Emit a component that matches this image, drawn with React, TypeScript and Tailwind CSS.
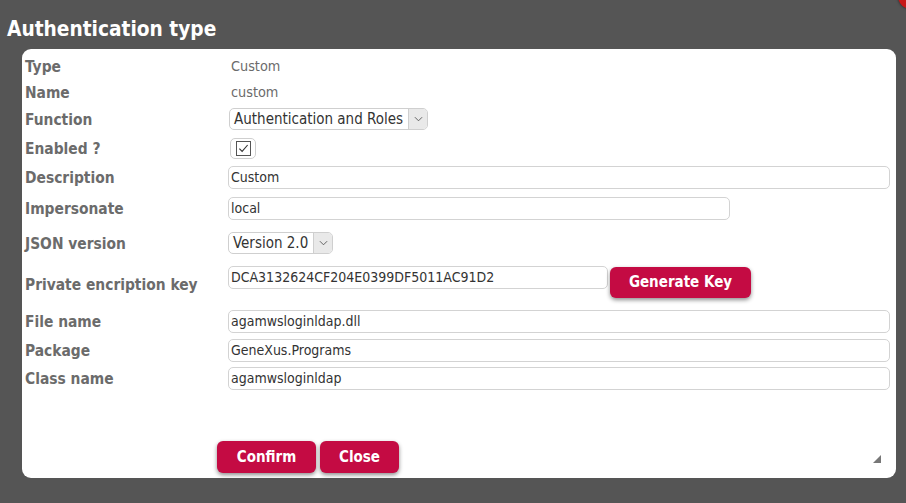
const font = { fontFamily: '"DejaVu Sans Condensed", "DejaVu Sans", sans-serif' };

const Chevron = () => (
  <svg viewBox="0 0 10 6" className="w-[9px] h-[6px]" fill="none" stroke="#555" strokeWidth={1}>
    <path d="M1 1l4 4 4-4" />
  </svg>
);

function Select({ value }: { value: string }) {
  return (
    <div className="flex h-[22px] items-stretch rounded-[5px] border border-[#cfcfcf] bg-white">
      <span className="flex items-center pl-[4px] pr-[5px] text-[15px] text-[#333]">{value}</span>
      <span className="flex w-[19px] items-center justify-center rounded-r-[4px] border-l border-[#cfcfcf] bg-[#e9e9e9]">
        <Chevron />
      </span>
    </div>
  );
}

function TextBox({ value, w }: { value: string; w: string }) {
  return (
    <div className={`flex h-[23px] items-center rounded-[5px] border border-[#d3d3d3] bg-white px-[2px] text-[14px] text-[#333] ${w}`}>
      {value}
    </div>
  );
}

function Btn({ label, w }: { label: string; w: string }) {
  return (
    <button className={`h-[31px] rounded-[6px] bg-[#c40b43] text-[15px] font-bold text-white shadow-[0_2px_4px_rgba(0,0,0,0.45)] ${w}`}>
      {label}
    </button>
  );
}

function Row({ label, h, children, top }: { label: string; h: string; children: React.ReactNode; top?: boolean }) {
  return (
    <div className={`flex ${h} ${top ? "items-start" : "items-center"}`}>
      <div className={`w-[206px] shrink-0 pl-[3px] pt-[3px] text-[15.4px] font-bold text-[#6b6b6b] ${top ? "self-center" : ""}`}>{label}</div>
      {children}
    </div>
  );
}

export default function App() {
  return (
    <div className="relative h-[503px] w-[906px] overflow-hidden bg-[#555555]" style={font}>
      <div className="absolute right-[-18px] top-[-17px] h-[26px] w-[26px] rounded-full bg-[#c81818] shadow-[0_0_3px_rgba(0,0,0,0.6)]" />
      <div className="flex h-[49px] items-center pl-[7px] pt-[11px] text-[20.7px] font-bold text-white">Authentication type</div>
      <div className="relative ml-[22px] flex h-[429px] w-[874px] flex-col rounded-[9px] bg-white pt-[4px]">
        <Row label="Type" h="h-[26px]">
          <span className="pl-[3px] pt-[2px] text-[14.3px] text-[#6b6b6b]">Custom</span>
        </Row>
        <Row label="Name" h="h-[26px]">
          <span className="pl-[3px] pt-[2px] text-[14.3px] text-[#6b6b6b]">custom</span>
        </Row>
        <Row label="Function" h="h-[28px]">
          <div className="pl-[1px]">
            <Select value="Authentication and Roles" />
          </div>
        </Row>
        <Row label="Enabled ?" h="h-[30px]">
          <div className="ml-[2px] flex h-[21px] w-[26px] items-center justify-center rounded-[5px] border border-[#cfcfcf]">
            <div className="flex h-[15px] w-[15px] items-center justify-center border border-[#555] bg-white">
              <svg viewBox="0 0 12 12" className="h-[11px] w-[11px]" fill="none" stroke="#333" strokeWidth={1.2}>
                <path d="M1.5 6.2l3 3 6-7" />
              </svg>
            </div>
          </div>
        </Row>
        <Row label="Description" h="h-[28px]">
          <TextBox value="Custom" w="w-[662px]" />
        </Row>
        <Row label="Impersonate" h="h-[34px]">
          <TextBox value="local" w="w-[502px]" />
        </Row>
        <Row label="JSON version" h="h-[36px]">
          <Select value="Version 2.0" />
        </Row>
        <Row label="Private encription key" h="h-[46px]" top>
          <div className="mt-[5px] flex items-start gap-[2px]">
            <TextBox value="DCA3132624CF204E0399DF5011AC91D2" w="w-[380px]" />
            <div className="mt-[1px]">
              <Btn label="Generate Key" w="w-[141px]" />
            </div>
          </div>
        </Row>
        <Row label="File name" h="h-[28px]">
          <TextBox value="agamwsloginldap.dll" w="w-[662px]" />
        </Row>
        <Row label="Package" h="h-[30px]">
          <TextBox value="GeneXus.Programs" w="w-[662px]" />
        </Row>
        <Row label="Class name" h="h-[26px]">
          <TextBox value="agamwsloginldap" w="w-[662px]" />
        </Row>
        <div className="ml-[195px] mt-[50px] flex gap-[4px]">
          <Btn label="Confirm" w="w-[99px] h-[32px]" />
          <Btn label="Close" w="w-[79px] h-[32px]" />
        </div>
        <svg className="absolute bottom-[15px] right-[15px] h-[8px] w-[8px]" viewBox="0 0 8 8">
          <path d="M8 0L8 8L0 8Z" fill="#777" />
        </svg>
      </div>
    </div>
  );
}
